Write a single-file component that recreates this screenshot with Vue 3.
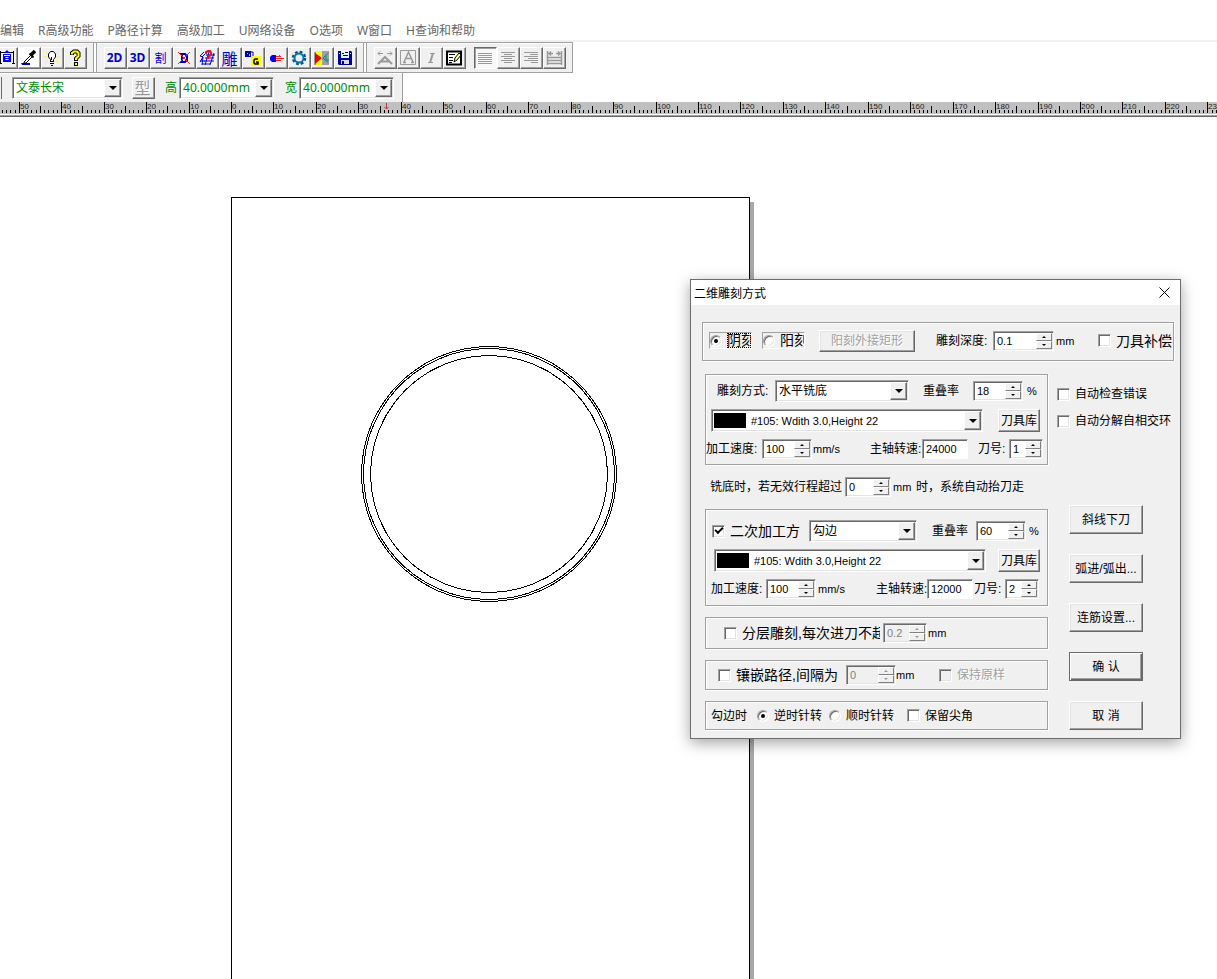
<script setup>
import { computed, h, onBeforeUnmount, onMounted, ref } from 'vue'

const menus = ['编辑', 'R高级功能', 'P路径计算', '高级加工', 'U网络设备', 'O选项', 'W窗口', 'H查询和帮助']

const SCALE = 4.245
const ORIGIN = 231
const rulerWidth = ref(window.innerWidth)
const measure = () => { rulerWidth.value = window.innerWidth }
onMounted(() => window.addEventListener('resize', measure))
onBeforeUnmount(() => window.removeEventListener('resize', measure))
const ticks = computed(() => {
  const list = []
  for (let i = -54; ORIGIN + i * SCALE < rulerWidth.value; i++) {
    const x = Math.round(ORIGIN + i * SCALE)
    const top = i % 10 === 0 ? 0 : i % 5 === 0 ? 4 : 8
    list.push({ x, top, label: i % 10 === 0 ? String(Math.abs(i)) : '' })
  }
  return list
})

function ring(radius, sides, turn) {
  const points = []
  for (let i = 0; i < sides; i++) {
    const a = ((i + turn) / sides) * Math.PI * 2
    points.push((489 + radius * Math.cos(a)).toFixed(1) + ',' + (357 + radius * Math.sin(a)).toFixed(1))
  }
  return points.join(' ')
}
const rings = [ring(127.5, 60, 0), ring(125.5, 60, 0), ring(118.5, 48, 0)]

const form = ref({
  kind: 'yin', depth: '0.1', comp: false,
  overlap1: '18', feed1: '100', spindle1: '24000', knife1: '1',
  idle: '0', second: true,
  overlap2: '60', feed2: '100', spindle2: '12000', knife2: '2',
  layered: false, layer: '0.2', inlay: false, gap: '0', keep: false,
  turn: 'ccw', sharp: false, check: false, split: false,
})

const Spin = (props) =>
  h('span', { class: ['spin', { off: props.disabled }] }, [
    h('input', {
      type: 'text', value: props.modelValue, disabled: props.disabled, 'aria-label': props.label,
      onInput: (e) => props['onUpdate:modelValue'](e.target.value),
    }),
    h('span', { class: 'arrows' }, [
      h('button', { type: 'button', class: 'up', disabled: props.disabled, 'aria-label': '增加', onClick: () => props['onUpdate:modelValue'](String(+props.modelValue + 1)) }),
      h('button', { type: 'button', class: 'down', disabled: props.disabled, 'aria-label': '减少', onClick: () => props['onUpdate:modelValue'](String(+props.modelValue - 1)) }),
    ]),
  ])
Spin.props = { modelValue: String, label: String, disabled: Boolean, 'onUpdate:modelValue': Function }

const Combo = (props) =>
  h('span', { class: ['combo', { swatch: props.swatch }] }, [
    h('select', { 'aria-label': props.label }, props.options.map((o) => h('option', o))),
    h('i', { class: 'drop' }),
  ])
Combo.props = { label: String, options: Array, swatch: Boolean }
</script>

<template>
  <div class="app">
    <nav class="menu">
      <a v-for="m in menus" :key="m" href="#">{{ m }}</a>
    </nav>

    <div class="strip">
      <div class="tools">
        <button type="button" class="tool" aria-label="选择">
          <svg class="ico" viewBox="0 0 18 18"><path d="M3 3.500h14M3.500 2v12M16.500 2v12M2 14.500h3M15 14.500h3" stroke="#000" fill="none" /><path d="M6 5h8v8H6z" fill="#00f" /><path d="M7 6.500h6M8.500 8.500h3M8.500 10.500h3" stroke="#fff" /><path d="M7 4l3-3 3 3z" fill="#00f" /></svg>
        </button>
        <button type="button" class="tool pale" aria-label="吸管">
          <svg class="ico" viewBox="0 0 18 18"><path d="M1 14h9v2H2z" fill="#00c" /><path d="M4 13l7-7 1.500 1.500L6 14H4z" fill="#fff" stroke="#000" /><path d="M9.500 4.500l4 4" stroke="#000" stroke-width="2" /><path d="M11 6l4-4" stroke="#000" stroke-width="3.500" /></svg>
        </button>
        <button type="button" class="tool" aria-label="提示">
          <svg class="ico" viewBox="0 0 18 18"><path d="M2 2l3 3M16 2l-3 3M1 8h3M14 8h3M2 14l3-3M16 14l-3-3" stroke="#f4f060" /><path d="M7.500 12.500v-2L5.500 8V5l2-2.500h3l2 2.500v3l-2 2.500v2z" fill="#fff" stroke="#000" /><path d="M7 12.500h4M7 14.500h4M8 16.500h2M8.500 8v3" stroke="#000" fill="none" /></svg>
        </button>
        <button type="button" class="tool" aria-label="帮助">
          <svg class="ico" viewBox="0 0 18 18"><path d="M6 6V4l2-1.500h3L12.500 4v3L10 9.500V12" stroke="#000" stroke-width="4" fill="none" /><path d="M6 5.500V4l2-1.500h3L12.500 4v3L10 9.500V11" stroke="#ff0" stroke-width="2" fill="none" /><path d="M8 13h4v4H8z" fill="#000" /><path d="M9 14h2v2H9z" fill="#ff0" /></svg>
        </button>
      </div>
      <i class="grip"></i>
      <div class="tools">
        <button type="button" class="tool latin">2D</button>
        <button type="button" class="tool latin">3D</button>
        <button type="button" class="tool cjk">割</button>
        <button type="button" class="tool" aria-label="删除路径">
          <svg class="ico" viewBox="0 0 18 18"><path d="M5 5h5l2 2v4l-2 2H5M7 5v8" stroke="#00a" stroke-width="2" fill="none" /><path d="M3 3l12 12M15 3L3 15" stroke="#f22" /></svg>
        </button>
        <button type="button" class="tool" aria-label="模拟">
          <svg class="ico" viewBox="0 0 18 18"><path d="M6 3L2 7l3 1-3 5M4 8l3-3M2 12h5M5 8l-1 8M8 6h9M7 9h9M6 12h10M4 15h8M11 3L7 16M16 4l-4 12" stroke="#00c" fill="none" /><path d="M8 5V3l2-1h2l1 2v2l-3 2v2" stroke="#f02" stroke-width="2" fill="none" /></svg>
        </button>
        <button type="button" class="tool cjk big">雕</button>
        <button type="button" class="tool" aria-label="转换代码">
          <svg class="ico" viewBox="0 0 18 18"><path d="M1 2h6v6H1z" fill="#00a" /><path d="M3 4h1v1H3zM5 5h1v2H5z" fill="#9cf" /><path d="M7 3h2v4" stroke="#00a" fill="none" /><path d="M7 7h10v10H7z" fill="#ff0" /><path d="M14 10h-3l-1 1v3l1 1h3v-2h-2" stroke="#000" stroke-width="1.500" fill="none" /></svg>
        </button>
        <button type="button" class="tool" aria-label="输出">
          <svg class="ico" viewBox="0 0 18 18"><path d="M3 8l2-2h4v7H5l-2-2z" fill="#00f" /><path d="M9 9.500h8M9 7.500h5M9 11.500h5M12.500 6v2" stroke="#e22" /></svg>
        </button>
        <button type="button" class="tool" aria-label="设置">
          <svg class="ico" viewBox="0 0 18 18"><circle cx="9" cy="9" r="6" fill="none" stroke="#058" stroke-width="2.500" stroke-dasharray="2.700 2" /><circle cx="9" cy="9" r="4.500" fill="#eef" stroke="#07a" stroke-width="2" /></svg>
        </button>
        <button type="button" class="tool" aria-label="镜像">
          <svg class="ico" viewBox="0 0 18 18"><path d="M2 2h7v14H2z" fill="#ff0" /><path d="M9 2h7v14H9z" fill="#a0a0a0" /><path d="M2 4l7 5-7 6z" fill="#e00" /><path d="M15.500 4L10 9l5.500 5M13 7v4h3" fill="none" stroke="#088" /><path d="M2 3v13" stroke="#444" /></svg>
        </button>
        <button type="button" class="tool" aria-label="保存">
          <svg class="ico" viewBox="0 0 18 18"><path d="M2 2h13l1 1v13H3l-1-1z" fill="#009" /><path d="M5 2h8v7H5z" fill="#dff" /><path d="M6 4.500h2M9 3.500h3M7 6.500h5" stroke="#009" /><path d="M5 11h8v4H5z" fill="#ddd" /><path d="M6 12h2v3H6z" fill="#009" /><path d="M3 4h1v1H3zM14 4h1v1h-1z" fill="#fff" /></svg>
        </button>
      </div>
      <i class="grip"></i>
      <div class="tools">
        <button type="button" class="tool" aria-label="文字变形">
          <svg class="ico gray" viewBox="0 0 18 18"><path d="M2 4.500h5M11 4.500h5M4 2.500l-2 2 2 2M14 2.500l2 2-2 2" /><path d="M2 15l7-7 7 7M5 12.500h8" stroke-width="2" /></svg>
        </button>
        <button type="button" class="tool" aria-label="文字框">
          <svg class="ico gray" viewBox="0 0 18 18"><path d="M1.500 1.500h15v14h-15z" /><path d="M5 13L9.500 3 14 13M6.500 9.500h6M4 13.500h3M12 13.500h3" stroke-width="1.500" /></svg>
        </button>
        <button type="button" class="tool" aria-label="斜体">
          <svg class="ico gray" viewBox="0 0 18 18"><path d="M8 4.500h5M6 13.500h5" /><path d="M11 4l-3 10" stroke-width="2" /></svg>
        </button>
        <button type="button" class="tool" aria-label="编辑文字">
          <svg class="ico" viewBox="0 0 18 18"><path d="M2 2.500h14v13H2z" fill="#fff" stroke="#000" stroke-width="2" /><path d="M4 5.500h6M4 8.500h4M4 11.500h4M4 13.500h3" stroke="#000" /><path d="M9 13l1-4 4-5 2 2-4 5z" fill="#ff9" stroke="#000" /></svg>
        </button>
      </div>
      <div class="tools align">
        <button type="button" class="tool pressed" aria-label="左对齐">
          <svg class="ico gray" viewBox="0 0 18 18"><path d="M2 4.500h14M2 6.500h14M2 8.500h14M2 10.500h14M2 12.500h14M2 14.500h14" /></svg>
        </button>
        <button type="button" class="tool" aria-label="居中">
          <svg class="ico gray" viewBox="0 0 18 18"><path d="M2 3.500h14M5 5.500h8M2 7.500h14M5 9.500h8M2 11.500h14M5 13.500h8" /></svg>
        </button>
        <button type="button" class="tool" aria-label="右对齐">
          <svg class="ico gray" viewBox="0 0 18 18"><path d="M2 3.500h14M8 5.500h8M2 7.500h14M6 9.500h10M2 11.500h14M9 13.500h7" /></svg>
        </button>
        <button type="button" class="tool" aria-label="两端对齐">
          <svg class="ico gray" viewBox="0 0 18 18"><path d="M2.500 2v14M16.500 2v14M4 4.500h4M11 4.500h4M6 2.500l-2 2 2 2M13 2.500l2 2-2 2M3 8.500h13M3 11.500h13M3 14.500h13" stroke-width="1.500" /></svg>
        </button>
      </div>
    </div>

    <div class="strip fontbar">
      <Combo class="face" label="字体" :options="['文泰长宋']" />
      <button type="button" class="tool type" disabled>型</button>
      <span>高</span>
      <Combo class="size" label="高" :options="['40.0000mm']" />
      <span>宽</span>
      <Combo class="size" label="宽" :options="['40.0000mm']" />
    </div>

    <svg class="ruler" aria-hidden="true">
      <g v-for="t in ticks" :key="t.x">
        <path :d="`M${t.x}.5 ${t.top}V11`" stroke="#000" shape-rendering="crispEdges" />
        <text v-if="t.label" :x="t.x + 1" y="7">{{ t.label }}</text>
      </g>
      <path d="M386.500 1v6M384.500 5l2 2 2-2" stroke="#c33" fill="none" />
    </svg>

    <main class="canvas">
      <svg class="sheet" aria-label="图纸">
        <rect x="750" y="85" width="4" height="4000" fill="#a8a8a8" />
        <rect x="231.500" y="80.500" width="518" height="4000" fill="#fff" stroke="#000" />
        <polygon v-for="(r, i) in rings" :key="i" :points="r" fill="none" stroke="#000" shape-rendering="crispEdges" />
      </svg>
    </main>

    <form class="dialog" role="dialog" aria-labelledby="dlg-title" @submit.prevent>
      <header>
        <span id="dlg-title">二维雕刻方式</span>
        <button type="button" class="close" aria-label="关闭">
          <svg viewBox="0 0 11 11"><path d="M.5.5l10 10M10.500.5l-10 10" stroke="#000" fill="none" /></svg>
        </button>
      </header>

      <div class="body">
        <div class="group row mode">
          <label class="tick wide boxed" :class="{ focus: form.kind === 'yin' }"><input v-model="form.kind" type="radio" name="kind" value="yin"><span>阴刻</span></label>
          <label class="tick wide boxed" :class="{ focus: form.kind === 'yang' }"><input v-model="form.kind" type="radio" name="kind" value="yang"><span>阳刻</span></label>
          <button type="button" class="btn rect" disabled>阳刻外接矩形</button>
          <span>雕刻深度:</span>
          <Spin v-model="form.depth" class="s60" label="雕刻深度" />
          <span class="unit">mm</span>
          <label class="tick wide"><input v-model="form.comp" type="checkbox"><span>刀具补偿</span></label>
        </div>

        <div class="columns">
          <div class="left">
            <div class="group first">
              <div class="row a1">
                <span>雕刻方式:</span>
                <Combo class="c134" label="雕刻方式" :options="['水平铣底']" />
                <span>重叠率</span>
                <Spin v-model="form.overlap1" class="s50" label="重叠率" />
                <span class="unit">%</span>
              </div>
              <div class="row a2">
                <Combo class="c271" swatch label="刀具" :options="['#105: Wdith 3.0,Height 22']" />
                <button type="button" class="btn lib">刀具库</button>
              </div>
              <div class="row a3">
                <span>加工速度:</span>
                <Spin v-model="form.feed1" class="s50" label="加工速度" />
                <span class="unit">mm/s</span>
                <label for="sp1">主轴转速:</label>
                <input id="sp1" v-model="form.spindle1" class="field" type="text">
                <span>刀号:</span>
                <Spin v-model="form.knife1" class="s34" label="刀号" />
              </div>
            </div>

            <div class="row idle">
              <span>铣底时，若无效行程超过</span>
              <Spin v-model="form.idle" class="s46" label="无效行程" />
              <span class="unit">mm</span>
              <span>时，系统自动抬刀走</span>
            </div>

            <div class="group second">
              <div class="row b1">
                <label class="tick wide"><input v-model="form.second" type="checkbox"><span>二次加工方</span></label>
                <Combo class="c107" label="二次加工方式" :options="['勾边']" />
                <span>重叠率</span>
                <Spin v-model="form.overlap2" class="s50" label="重叠率" />
                <span class="unit">%</span>
              </div>
              <div class="row b2">
                <Combo class="c271" swatch label="刀具" :options="['#105: Wdith 3.0,Height 22']" />
                <button type="button" class="btn lib">刀具库</button>
              </div>
              <div class="row b3">
                <span>加工速度:</span>
                <Spin v-model="form.feed2" class="s50" label="加工速度" />
                <span class="unit">mm/s</span>
                <label for="sp2">主轴转速:</label>
                <input id="sp2" v-model="form.spindle2" class="field" type="text">
                <span>刀号:</span>
                <Spin v-model="form.knife2" class="s34" label="刀号" />
              </div>
            </div>

            <div class="group row layer">
              <label class="tick wide"><input v-model="form.layered" type="checkbox"><span>分层雕刻,每次进刀不超</span></label>
              <Spin v-model="form.layer" class="s44" label="每次进刀" disabled />
              <span class="unit">mm</span>
            </div>

            <div class="group row inlay">
              <label class="tick wide"><input v-model="form.inlay" type="checkbox"><span>镶嵌路径,间隔为</span></label>
              <Spin v-model="form.gap" class="s50" label="间隔" disabled />
              <span class="unit">mm</span>
              <label class="tick dim"><input v-model="form.keep" type="checkbox" disabled><span>保持原样</span></label>
            </div>

            <div class="group row edge">
              <span>勾边时</span>
              <label class="tick"><input v-model="form.turn" type="radio" name="turn" value="ccw"><span>逆时针转</span></label>
              <label class="tick"><input v-model="form.turn" type="radio" name="turn" value="cw"><span>顺时针转</span></label>
              <label class="tick"><input v-model="form.sharp" type="checkbox"><span>保留尖角</span></label>
            </div>
          </div>

          <div class="right">
            <div class="checks">
              <label class="tick"><input v-model="form.check" type="checkbox"><span>自动检查错误</span></label>
              <label class="tick"><input v-model="form.split" type="checkbox"><span>自动分解自相交环</span></label>
            </div>
            <div class="actions">
              <button type="button" class="btn">斜线下刀</button>
              <button type="button" class="btn">弧进/弧出...</button>
              <button type="button" class="btn">连筋设置...</button>
              <button type="submit" class="btn default">确 认</button>
              <button type="button" class="btn">取 消</button>
            </div>
          </div>
        </div>
      </div>
    </form>
  </div>
</template>

<style>
body { background: #fff; }
button, input, select { font: inherit; color: inherit; margin: 0; border-radius: 0; }
.combo, .spin {
  display: flex;
  position: relative;
  box-sizing: border-box;
  background: #fff;
  border: 1px solid;
  border-color: #a0a0a0 #fff #fff #a0a0a0;
  box-shadow: inset 1px 1px 0 #696969, inset -1px -1px 0 #e3e3e3;
  padding: 1px;
}
.combo select {
  flex: 1;
  min-width: 0;
  appearance: none;
  border: 0;
  background: transparent;
  padding: 0 0 0 2px;
  outline: 0;
}
.combo .drop {
  width: 17px;
  box-sizing: border-box;
  background: #f0f0f0;
  border: 1px solid;
  border-color: #fff #696969 #696969 #fff;
  box-shadow: inset -1px -1px 0 #a0a0a0;
  display: grid;
  place-items: center;
  pointer-events: none;
}
.combo .drop::after {
  content: "";
  border: 4px solid transparent;
  border-top-color: #000;
  border-bottom: 0;
}
.combo.swatch::before {
  content: "";
  width: 32px;
  margin: 2px 3px 2px 1px;
  background: #000;
}
.spin { height: 20px; }
.spin input {
  flex: 1;
  min-width: 0;
  border: 0;
  padding: 0 0 0 2px;
  background: transparent;
  outline: 0;
}
.spin .arrows { display: flex; flex-direction: column; width: 16px; background: #f0f0f0; }
.spin .arrows button {
  flex: 1;
  min-height: 0;
  box-sizing: border-box;
  padding: 0;
  background: #f0f0f0;
  border: 1px solid;
  border-color: #fff #808080 #808080 #fff;
  display: grid;
  place-items: center;
}
.spin .arrows button::after { content: ""; border: 2px solid transparent; }
.spin .arrows .up::after { border-bottom-color: #000; border-top: 0; }
.spin .arrows .down::after { border-top-color: #000; border-bottom: 0; }
.spin.off { background: #f0f0f0; }
.spin.off input { color: #808080; }
.spin.off .arrows .up::after { border-bottom-color: #999; }
.spin.off .arrows .down::after { border-top-color: #999; }
</style>

<style scoped>
.app {
  position: relative;
  display: flex;
  flex-direction: column;
  height: 100vh;
  overflow: hidden;
  background: #fff;
  font: 12px/16px "Liberation Sans", "Noto Sans CJK SC", sans-serif;
  color: #000;
}
.menu {
  display: flex;
  gap: 14px;
  padding: 23px 0 1px;
  border-bottom: 2px solid #f0f0f0;
  font-family: "Noto Sans", "Noto Sans CJK SC", sans-serif;
}
.menu a { color: #666; text-decoration: none; white-space: nowrap; }
.strip {
  display: flex;
  align-items: center;
  align-self: flex-start;
  box-sizing: border-box;
  height: 31px;
  padding-right: 6px;
  background: #f0f0f0;
  border: 1px solid #a0a0a0;
  border-left: 0;
  box-shadow: inset 0 1px 0 #fff;
  position: relative;
}
.strip .tools:first-child { margin-left: -5px; }
.tools { display: flex; }
.tools.align { margin-left: 8px; }
.grip {
  width: 2px;
  height: 29px;
  margin: 0 7px 0 6px;
  border: 1px solid #a0a0a0;
  background: #fff;
}
.tool {
  width: 23px;
  height: 22px;
  box-sizing: border-box;
  padding: 0 2px 0 0;
  display: grid;
  place-items: center;
  background: #f0f0f0;
  border: 1px solid;
  border-color: #fff #696969 #696969 #fff;
  box-shadow: inset -1px -1px 0 #a0a0a0;
  line-height: 18px;
}
.tool.pale { background: #fff; }
.tool.pressed {
  background: #f8f8f8;
  border-color: #696969 #fff #fff #696969;
  box-shadow: inset 1px 1px 0 #a0a0a0;
}
.tool.latin { font: bold 12px/18px "Noto Sans", sans-serif; color: #00c; }
.tool.cjk { font-family: "Noto Sans CJK SC", sans-serif; color: #00c; }
.tool.cjk.big { font-size: 16px; }
.ico { width: 18px; height: 18px; display: block; }
.ico.gray { stroke: #999; fill: none; }
.fontbar {
  height: 29px;
  padding: 0 8px 0 12px;
  border-top: 0;
  border-bottom: 0;
  color: #080;
  font-family: "Noto Sans", "Noto Sans CJK SC", sans-serif;
}
.fontbar::before {
  content: "";
  position: absolute;
  left: 0;
  top: 4px;
  width: 1px;
  height: 22px;
  border-right: 1px solid #696969;
}
.fontbar .combo { height: 22px; }
.fontbar .face { width: 111px; margin-right: 9px; }
.fontbar .size { width: 95px; margin: 0 11px 0 2px; }
.fontbar .size:last-child { margin-right: 0; }
.tool.type { font-size: 16px; color: #999; margin-right: 10px; text-shadow: 1px 1px 0 #fff; }
.ruler {
  display: block;
  width: 100%;
  height: 12px;
  flex: none;
  background: #c0c0c0;
  border-bottom: 1px solid #fff;
  box-shadow: 0 1px 0 #a0a0a0, 0 2px 0 #696969;
  margin-bottom: 2px;
}
.ruler text { font: 8px "Liberation Sans", sans-serif; fill: #222; }
.canvas { flex: 1; min-height: 0; }
.sheet { display: block; width: 100%; height: 100%; }

.dialog {
  position: absolute;
  left: 690px;
  top: 279px;
  border: 1px solid #6d6d6d;
  background: #f0f0f0;
  box-shadow: 0 4px 14px rgba(0, 0, 0, 0.36);
}
.dialog header {
  display: flex;
  align-items: center;
  justify-content: space-between;
  height: 25px;
  padding: 0 10px 0 3px;
  background: #fff;
  font-family: "Noto Sans CJK SC", sans-serif;
}
.close { border: 0; padding: 0; background: none; }
.close svg { display: block; width: 11px; height: 11px; }
.body { padding: 17px 6px 8px 11px; }
.group {
  box-sizing: border-box;
  border: 1px solid #a0a0a0;
  box-shadow: 1px 1px 0 #fff, inset 1px 1px 0 #fff;
}
.row { display: grid; align-items: center; justify-items: start; white-space: nowrap; }
.unit { font-size: 11px; }
.dialog .spin, .dialog .combo { font-size: 11px; }
.dialog .c134, .dialog .c107 { font-size: 12px; height: 22px; }
.s34 { width: 34px; }
.s44 { width: 44px; }
.s46 { width: 46px; }
.s50 { width: 50px; }
.s60 { width: 61px; }
.c107 { width: 108px; }
.c134 { width: 134px; }
.c271 { width: 272px; height: 23px; }

.mode { grid-template-columns: 53px 57px 117px 57px 63px 42px 1fr; height: 39px; padding: 0 0 2px 6px; }
.columns { display: flex; gap: 8px; margin: 13px 0 0 3px; }
.left { display: flex; flex-direction: column; gap: 11px; width: 343px; }
.first, .second { display: flex; flex-direction: column; gap: 7px; }
.first { padding: 5px 0; height: 91px; }
.a1 { grid-template-columns: 58px 148px 50px 54px 1fr; padding-left: 11px; }
.a2 { grid-template-columns: 287px 1fr; padding-left: 5px; }
.a3 { grid-template-columns: 56px 51px 57px 52px 56px 31px 1fr; }
.idle { grid-template-columns: 135px 48px 23px 1fr; height: 22px; padding-left: 5px; }
.second { padding: 10px 0 5px; height: 97px; }
.b1 { grid-template-columns: 97px 123px 44px 53px 1fr; padding-left: 6px; }
.b2 { grid-template-columns: 284px 1fr; padding-left: 8px; }
.b3 { grid-template-columns: 55px 52px 58px 51px 47px 31px 1fr; padding-left: 5px; }
.layer { grid-template-columns: 159px 45px 1fr; height: 32px; padding-left: 18px; }
.inlay { grid-template-columns: 128px 50px 43px 1fr; height: 30px; padding-left: 12px; }
.edge { grid-template-columns: 46px 72px 78px 1fr; height: 29px; padding-left: 5px; }

.field {
  width: 46px;
  height: 20px;
  box-sizing: border-box;
  border: 1px solid;
  border-color: #a0a0a0 #fff #fff #a0a0a0;
  box-shadow: inset 1px 1px 0 #696969;
  background: #fff;
  padding: 0 0 0 3px;
  font-size: 11px;
}
.tick { display: flex; align-items: center; gap: 5px; }
.tick.wide { font-size: 14px; }
.tick input {
  appearance: none;
  flex: none;
  width: 13px;
  height: 13px;
  background: #fff;
  border: 1px solid;
  border-color: #a0a0a0 #fff #fff #a0a0a0;
  box-shadow: inset 1px 1px 0 #696969, inset -1px -1px 0 #e3e3e3;
  display: grid;
  place-items: center;
}
.tick input[type="radio"] { width: 12px; height: 12px; border-radius: 50%; }
.tick input[type="radio"]:checked::after { content: ""; width: 4px; height: 4px; border-radius: 50%; background: #000; }
.tick input[type="checkbox"]:checked::after {
  content: "";
  width: 6px;
  height: 3px;
  margin-bottom: 3px;
  border: solid #000;
  border-width: 0 0 2px 2px;
  transform: rotate(-45deg);
}
.tick.boxed {
  width: 43px;
  height: 17px;
  box-sizing: border-box;
  overflow: hidden;
  border: 1px solid;
  border-color: #a0a0a0 #fff #fff #a0a0a0;
}
.tick.boxed span { width: 24px; overflow: hidden; height: 15px; line-height: 15px; }
.tick.focus span { outline: 1px dotted #000; outline-offset: -1px; }
.tick.dim { color: #a0a0a0; text-shadow: 1px 1px 0 #fff; }
.tick.dim input { background: #f0f0f0; }
.layer .tick span { width: 138px; overflow: hidden; }
.btn {
  box-sizing: border-box;
  width: 74px;
  height: 29px;
  padding: 0;
  background: #f0f0f0;
  border: 1px solid;
  border-color: #fff #696969 #696969 #fff;
  box-shadow: inset -1px -1px 0 #a0a0a0, inset 1px 1px 0 #e3e3e3;
  white-space: nowrap;
}
.btn.rect { width: 96px; height: 22px; color: #a0a0a0; text-shadow: 1px 1px 0 #fff; }
.btn.lib { width: 42px; height: 23px; }
.btn.default { border-color: #696969; box-shadow: inset 1px 1px 0 #fff, inset -1px -1px 0 #696969, inset -2px -2px 0 #a0a0a0; }
.right { flex: 1; display: flex; flex-direction: column; justify-content: space-between; white-space: nowrap; }
.checks { display: flex; flex-direction: column; gap: 11px; padding: 12px 3px 0 1px; }
.actions { display: flex; flex-direction: column; gap: 20px; padding-left: 13px; }
</style>
